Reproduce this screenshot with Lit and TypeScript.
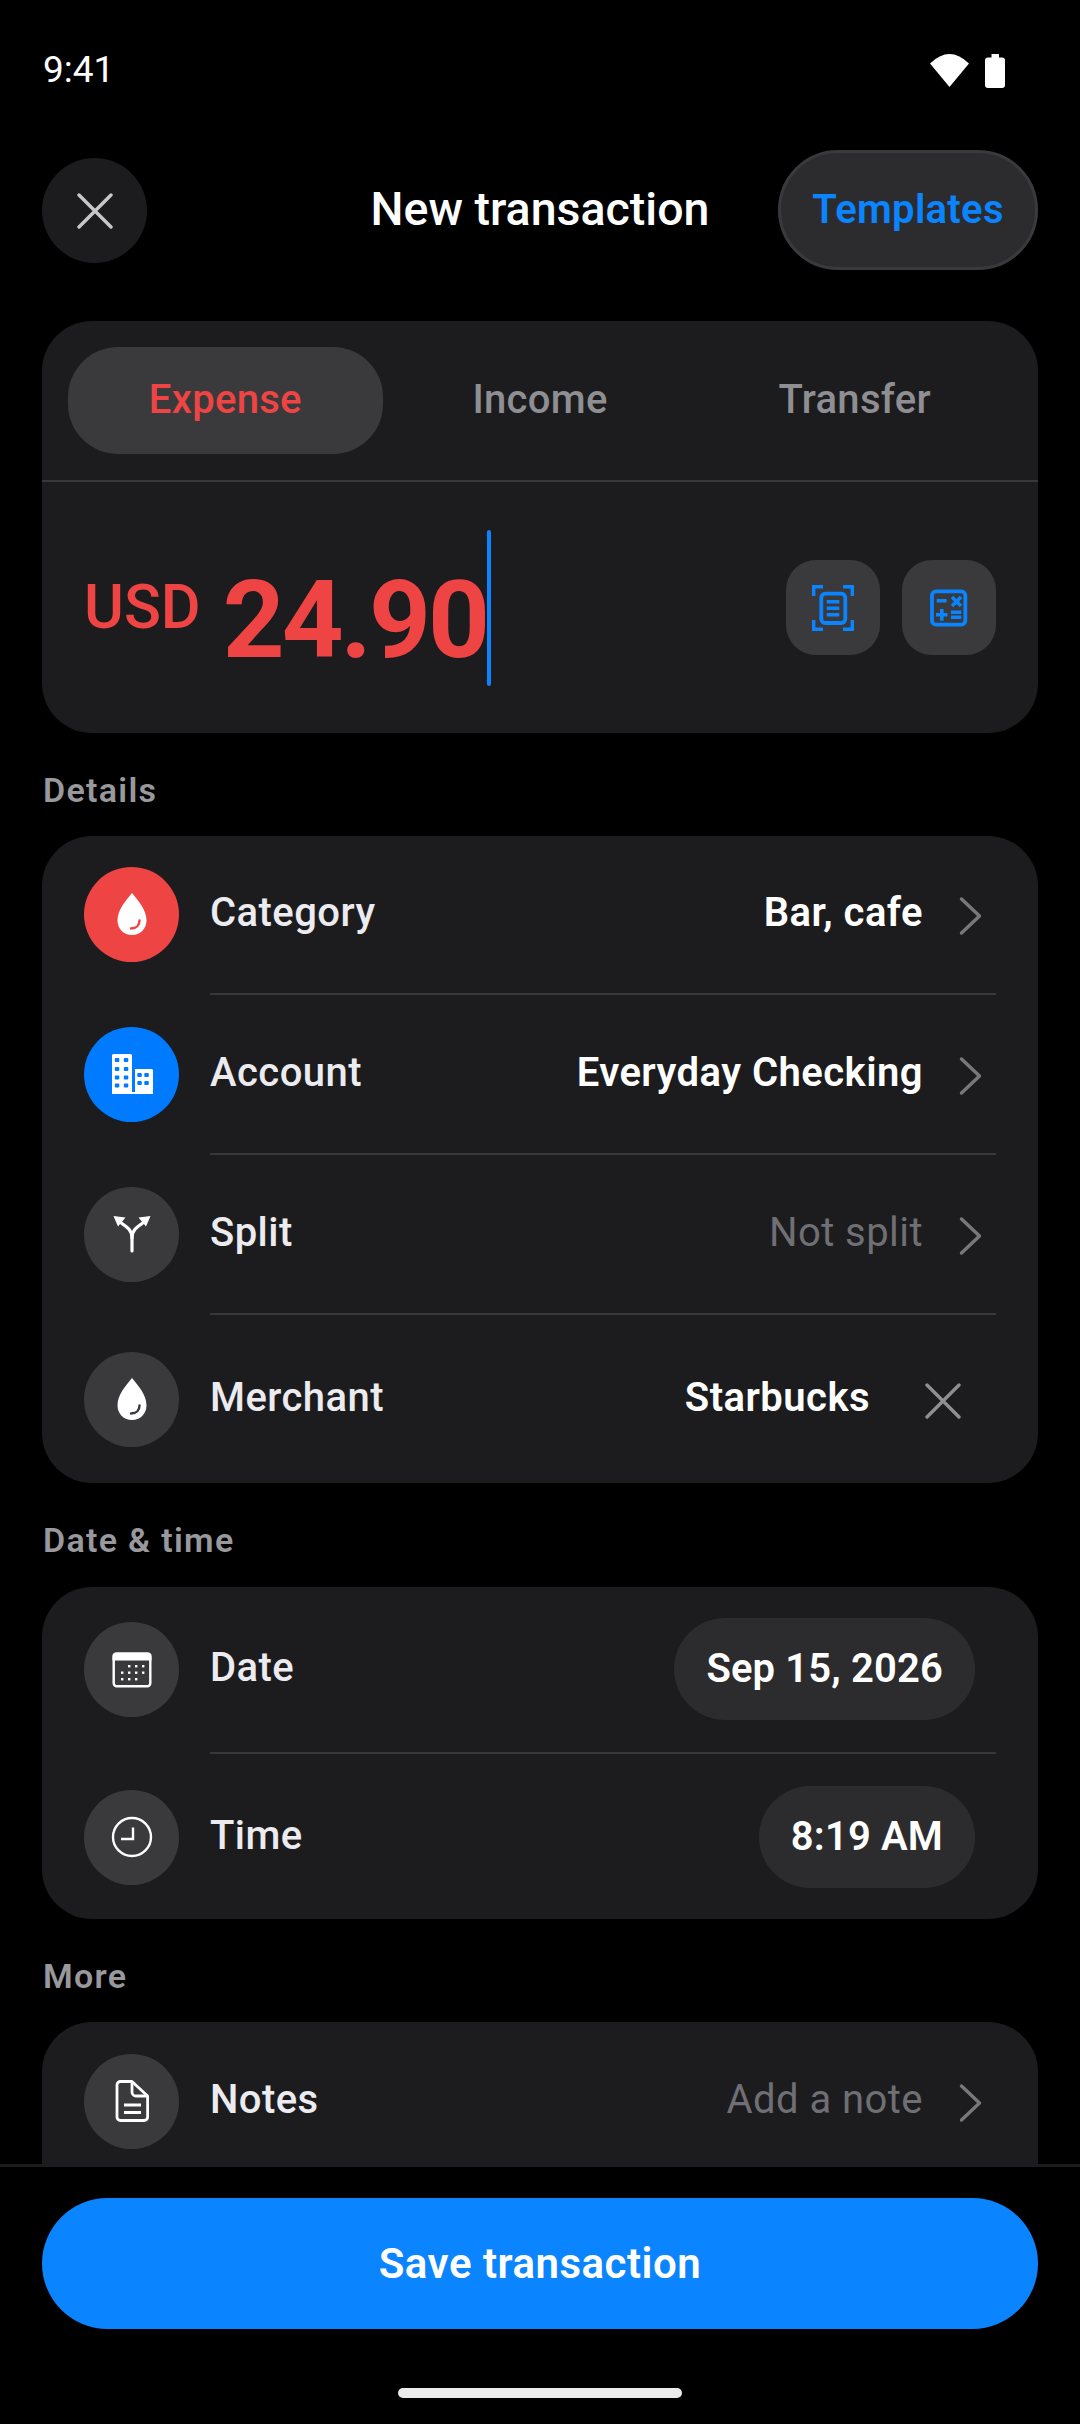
import { LitElement, html, css, svg } from "lit";
import { customElement } from "lit/decorators.js";

const ic = (body: unknown, size = 48) => html`<svg width=${size} height=${size} viewBox="0 0 ${size} ${size}" fill="none">${body}</svg>`;

const drop = svg`<path fill="#fff" d="M24 3C17 11.500 9.500 20 9.500 30.500C9.500 39 16 45 24 45C32 45 38.500 39 38.500 30.500C38.500 20 31 11.500 24 3Z"/><path stroke="var(--ibg)" stroke-width="2.400" stroke-linecap="round" d="M23 38.500C28.500 38.500 31.500 35 31.500 30.500"/>`;

const building = svg`<path fill="#fff" d="M4 5.500a1.500 1.500 0 0 1 1.500-1.500H22.500a1.500 1.500 0 0 1 1.500 1.500V42H27V19H43.500a1.500 1.500 0 0 1 1.500 1.500V44H4Z"/>
${[8, 17, 25.5, 33.5].flatMap((y) => [6.8, 15.8].map((x) => svg`<rect x=${x} y=${y} width="4.500" height="4" rx="1" fill="var(--ibg)"/>`))}
${[23, 31].flatMap((y) => [29.3, 36.3].map((x) => svg`<rect x=${x} y=${y} width="4.500" height="4" rx="1" fill="var(--ibg)"/>`))}`;

const split = svg`<g stroke="#fff" stroke-width="3.200" stroke-linecap="round" stroke-linejoin="round"><path d="M24 41V28C24 20 19 17 12 12"/><path d="M24 28C24 20 29 17 36 12"/></g><path fill="#fff" d="M5.500 6L17.500 7.500L10 16.500Z"/><path fill="#fff" d="M42.500 6L30.500 7.500L38 16.500Z"/>`;

const calendar = svg`<rect x="5.700" y="8.700" width="36.600" height="32.600" rx="3" stroke="#fff" stroke-width="2.400"/><path fill="#fff" d="M4.500 11a3.500 3.500 0 0 1 3.500-3.500H40a3.500 3.500 0 0 1 3.500 3.500V15.500H4.500Z"/>
${[[21, 21], [28, 21], [35, 21], [14, 27.5], [21, 27.5], [28, 27.5], [35, 27.5], [14, 34], [21, 34], [28, 34]].map(([x, y]) => svg`<rect x=${x - 1} y=${y - 1} width="2.400" height="2.400" fill="#fff"/>`)}`;

const clock = svg`<circle cx="24" cy="24" r="19" stroke="#fff" stroke-width="2.400"/><path d="M25 14.500V26H13" stroke="#fff" stroke-width="2.400"/>`;

const doc = svg`<path stroke="#fff" stroke-width="2.800" stroke-linejoin="round" d="M12.500 4.500H24L39.600 19V40a3.500 3.500 0 0 1-3.500 3.500H12.500A3.500 3.500 0 0 1 9 40V8A3.500 3.500 0 0 1 12.500 4.500Z"/><path stroke="#fff" stroke-width="2.800" d="M24 4.500V15a4 4 0 0 0 4 4H39.600M16 28H33M16 35.500H33"/>`;

const chevron = html`<svg class="chev" width="30" height="44" viewBox="0 0 30 44" fill="none"><path d="M5.500 5L23.500 22L5.500 39" stroke="#77777c" stroke-width="3.400" stroke-linecap="round" stroke-linejoin="round"/></svg>`;

const cross = (color: string) => html`<svg width="36" height="36" viewBox="0 0 36 36" fill="none"><path d="M2 2L34 34M34 2L2 34" stroke=${color} stroke-width="3.400" stroke-linecap="round"/></svg>`;

const scan = html`<svg width="48" height="52" viewBox="0 0 48 52" fill="none" stroke="#0a84ff" stroke-width="3.400">
<path d="M14 4.700H4.700V14M34 4.700H43.300V14M14 47.300H4.700V38M34 47.300H43.300V38"/>
<rect x="12.300" y="11.700" width="24" height="29.300" rx="4" stroke-width="3.800"/><path d="M17.700 19.700H30.300M17.700 26.300H30.300M17.700 32.700H30.300"/></svg>`;

const calc = html`<svg width="48" height="48" viewBox="0 0 48 48" fill="none" stroke="#0a84ff" stroke-width="3.600">
<rect x="7" y="7.300" width="33.300" height="33.400" rx="4" stroke-width="3.800"/><path d="M11.700 16.700H21.700M27 13L36 22M36 13L27 22M11 30.800H22.500M16.800 25V36.700M26 28.300H36.300M26 33.300H36.300"/></svg>`;

type Row = { icon: unknown; bg: string; label: string; value: string; muted?: boolean; tail?: "x" };

@customElement("app-root")
export class AppRoot extends LitElement {
  static styles = css`
    :host { display: block; width: 1080px; height: 2424px; background: #000; color: #fff; font-family: Roboto, "Noto Sans", sans-serif; overflow: hidden; }
    * { box-sizing: border-box; }
    .page { height: 2424px; display: flex; flex-direction: column; }
    .status { height: 140px; flex: none; display: flex; justify-content: space-between; align-items: flex-start; padding: 50px 75px 0 43px; }
    .time { font-size: 37px; line-height: 40px; }
    .status-icons { display: flex; align-items: flex-start; gap: 16px; padding-top: 4px; }
    .scroll { flex: 1; min-height: 0; overflow: hidden; padding: 0 42px; }
    .nav { height: 181px; display: flex; align-items: flex-start; justify-content: space-between; padding-top: 10px; position: relative; }
    .close { width: 105px; height: 105px; margin-top: 8px; border-radius: 50%; background: #1c1c1e; display: flex; align-items: center; justify-content: center; }
    .title { position: absolute; left: 0; right: 0; top: 42px; text-align: center; font-size: 46.5px; line-height: 54px; font-weight: 500; }
    .templates { width: 260px; height: 120px; border-radius: 60px; background: #2c2c2e; border: 3px solid #3a3a3c; color: #0a84ff; font-size: 40px; font-weight: 600; letter-spacing: 0.3px; display: flex; align-items: center; justify-content: center; padding-bottom: 2px; }
    .card { background: #1c1c1e; border-radius: 50px; }
    .tabs { display: flex; padding: 26px 26px 0; height: 161px; border-bottom: 2px solid #38383a; }
    .tab { flex: 1; height: 107px; border-radius: 50px; display: flex; align-items: center; justify-content: center; font-size: 40px; font-weight: 500; letter-spacing: 0.3px; color: #8e8e93; padding-bottom: 3px; }
    .tab.on { background: #3a3a3c; color: #ef4444; }
    .amount { height: 251px; display: flex; align-items: center; padding: 0 42px; }
    .usd { font-size: 61px; color: #ef4444; font-weight: 500; margin-right: 22px; line-height: 70px; margin-bottom: 2px; }
    .value { font-size: 108px; font-weight: 700; color: #ef4444; line-height: 130px; letter-spacing: -3px; margin-top: 24px; margin-right: 0; }
    .caret { width: 4px; height: 156px; background: #0a84ff; border-radius: 2px; }
    .spacer { flex: 1; }
    .tool { width: 94px; height: 95px; border-radius: 30px; background: #3a3a3c; display: flex; align-items: center; justify-content: center; margin-left: 22px; }
    .sect { font-size: 34px; line-height: 40px; font-weight: 600; letter-spacing: 1.3px; color: #98989d; height: 104px; display: flex; align-items: center; padding: 10px 0 0 1px; }
    .tight { height: 103px; }
    .row { display: flex; align-items: center; padding: 0 42px; }
    .high { padding-bottom: 1px; }
    .low { padding-top: 1px; }
    .circle { width: 95px; height: 95px; border-radius: 50%; flex: none; display: flex; align-items: center; justify-content: center; margin-right: 31px; }
    .label { font-size: 40px; font-weight: 500; letter-spacing: 0.45px; color: #ebebf0; flex: 1; padding-bottom: 3px; }
    .val { font-size: 40px; font-weight: 600; letter-spacing: 0.45px; color: #fff; padding-bottom: 3px; }
    .val.muted { font-weight: 400; color: #6f6f74; }
    .chev { margin-left: 33px; margin-right: 10px; margin-top: 4px; flex: none; }
    .x { margin-left: 55px; margin-right: 35px; margin-top: 4px; display: flex; }
    .sep { height: 2px; background: #38383a; margin: 0 42px 0 168px; }
    .pill { height: 102px; border-radius: 51px; background: #2c2c2e; display: flex; align-items: center; padding: 0 32px 2px; font-size: 40px; font-weight: 600; letter-spacing: 0.15px; margin-right: 21px; }
    .footer { flex: none; height: 260px; border-top: 3px solid #1c1c1e; padding: 31px 42px 0; position: relative; }
    .save { height: 131px; border-radius: 66px; background: #0a84ff; display: flex; align-items: center; justify-content: center; font-size: 42px; font-weight: 600; letter-spacing: 0.5px; }
    .home { position: absolute; left: 398px; top: 221px; width: 284px; height: 10px; border-radius: 5px; background: #ebebeb; }
  `;

  private row(r: Row, h: number, cls = "") {
    return html`<div class="row ${cls}" style="height:${h}px">
      <div class="circle" style="background:${r.bg};--ibg:${r.bg}">${r.icon}</div>
      <div class="label">${r.label}</div>
      <div class="val ${r.muted ? "muted" : ""}">${r.value}</div>
      ${r.tail === "x" ? html`<div class="x">${cross("#8e8e93")}</div>` : chevron}
    </div>`;
  }

  private pillRow(icon: unknown, label: string, value: string, h: number, cls = "") {
    return html`<div class="row ${cls}" style="height:${h}px">
      <div class="circle" style="background:#3a3a3c;--ibg:#3a3a3c">${icon}</div>
      <div class="label">${label}</div>
      <div class="pill">${value}</div>
    </div>`;
  }

  render() {
    return html`<div class="page">
      <div class="status">
        <div class="time">9:41</div>
        <div class="status-icons">
          <svg width="39" height="33" viewBox="0 0 39 33"><path fill="#fff" d="M19.500 33L0 9.500Q19.500 -9.500 39 9.500Z"/></svg>
          <svg width="20" height="34" viewBox="0 0 20 34"><path fill="#fff" d="M6.500 0H14V3.500H17a3 3 0 0 1 3 3V31a3 3 0 0 1-3 3H3a3 3 0 0 1-3-3V6.500a3 3 0 0 1 3-3H6.500Z"/></svg>
        </div>
      </div>
      <div class="scroll">
        <div class="nav">
          <div class="close">${cross("#c7c7cc")}</div>
          <div class="title">New transaction</div>
          <div class="templates">Templates</div>
        </div>
        <div class="card">
          <div class="tabs">
            <div class="tab on">Expense</div>
            <div class="tab">Income</div>
            <div class="tab">Transfer</div>
          </div>
          <div class="amount">
            <span class="usd">USD</span><span class="value">24.90</span><span class="caret"></span>
            <span class="spacer"></span>
            <div class="tool">${scan}</div>
            <div class="tool">${calc}</div>
          </div>
        </div>
        <div class="sect tight">Details</div>
        <div class="card">
          ${this.row({ icon: ic(drop), bg: "#ef4444", label: "Category", value: "Bar, cafe" }, 157, "high")}
          <div class="sep"></div>
          ${this.row({ icon: ic(building), bg: "#007aff", label: "Account", value: "Everyday Checking" }, 158)}
          <div class="sep"></div>
          ${this.row({ icon: ic(split), bg: "#3a3a3c", label: "Split", value: "Not split", muted: true }, 158)}
          <div class="sep"></div>
          ${this.row({ icon: ic(drop), bg: "#3a3a3c", label: "Merchant", value: "Starbucks", tail: "x" }, 168)}
        </div>
        <div class="sect">Date &amp; time</div>
        <div class="card">
          ${this.pillRow(ic(calendar), "Date", "Sep 15, 2026", 165, "high")}
          <div class="sep"></div>
          ${this.pillRow(ic(clock), "Time", "8:19 AM", 165, "low")}
        </div>
        <div class="sect tight">More</div>
        <div class="card" style="height:300px">
          ${this.row({ icon: ic(doc), bg: "#3a3a3c", label: "Notes", value: "Add a note", muted: true }, 158)}
        </div>
      </div>
      <div class="footer">
        <div class="save">Save transaction</div>
        <div class="home"></div>
      </div>
    </div>`;
  }
}
